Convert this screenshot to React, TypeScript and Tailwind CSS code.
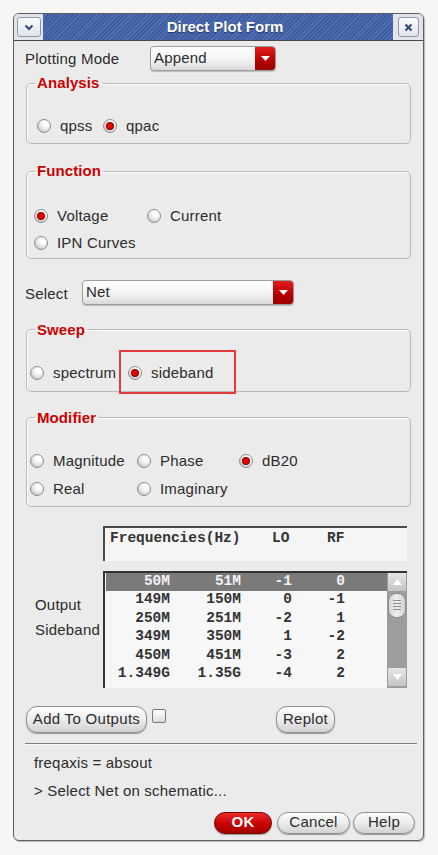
import type { ReactNode } from 'react';

const rows = [
    ['50M', '51M', '-1', '0'],
    ['149M', '150M', '0', '-1'],
    ['250M', '251M', '-2', '1'],
    ['349M', '350M', '1', '-2'],
    ['450M', '451M', '-3', '2'],
    ['1.349G', '1.35G', '-4', '2'],
];

function Radio({ checked = false, label, className = '' }: { checked?: boolean; label: string; className?: string }) {
    return (
        <div className={`flex h-[18px] shrink-0 items-center ${className}`}>
            <span className="flex h-[14px] w-[14px] shrink-0 items-center justify-center rounded-full border border-[#8e8e8e] bg-[radial-gradient(circle_at_65%_30%,#ffffff_20%,#e4e4e4_55%,#a8a8a8_100%)]">
                {checked && <span className="h-[6px] w-[6px] rounded-full bg-[#e40000] shadow-[0_0_0_1px_#8a0000]" />}
            </span>
            <span className="ml-[9px] leading-[18px]">{label}</span>
        </div>
    );
}

function Group({ title, children, className = '' }: { title: string; children: ReactNode; className?: string }) {
    return (
        <fieldset className={`rounded-[5px] border border-[#b9b9b9] shadow-[inset_1px_1px_0_#ffffff] ${className}`}>
            <legend className="ml-[8px] px-[2px] text-[15px] font-bold leading-4 tracking-[0.1px] text-[#cc0000]">{title}</legend>
            {children}
        </fieldset>
    );
}

function Dropdown({ value, className = '' }: { value: string; className?: string }) {
    return (
        <div className={`flex h-[25px] overflow-hidden rounded-[4px] border border-[#9c9c9c] bg-[linear-gradient(#ffffff,#f2f2f2_60%,#d9d9d9)] shadow-[0_1px_1px_rgba(0,0,0,0.2)] ${className}`}>
            <span className="flex-1 pl-[3px] text-[15px] leading-[21px]">{value}</span>
            <span className="flex w-[20px] items-center justify-center bg-[linear-gradient(#e41c1c,#b40000_60%,#9c0000)]">
                <svg width="9" height="5" viewBox="0 0 9 5">
                    <path d="M0 0H9L4.5 5Z" fill="#ffffff" />
                </svg>
            </span>
        </div>
    );
}

function Button({ children, red = false, className = '' }: { children: ReactNode; red?: boolean; className?: string }) {
    const look = red
        ? 'border-[#7a0000] bg-[linear-gradient(#ec2a2a,#c80000_55%,#a00000)] font-bold text-white'
        : 'border-[#8f8f8f] bg-[linear-gradient(#fdfdfd,#ececec_50%,#d2d2d2)]';
    return (
        <button className={`flex items-center justify-center rounded-[11px] border text-[15px] tracking-[0.3px] shadow-[0_1px_1px_rgba(0,0,0,0.35)] ${look} ${className}`}>
            {children}
        </button>
    );
}

export default function App() {
    return (
        <div className="min-h-[855px] bg-[#f6f6f6] pl-[13px] pt-[13px] font-[family-name:'Liberation_Sans',Arial,sans-serif] text-[#2c2c2c]">
            <div className="w-[411px] overflow-hidden rounded-[6px] border border-[#5e5e5e] bg-[#ebebeb] shadow-[1px_1px_1px_rgba(0,0,0,0.25)]">
                {/* title bar */}
                <div className="flex h-[27px] border-b border-[#4a4a4a]">
                    <div className="flex w-[29px] items-center justify-center bg-[#e2e5ea]">
                        <div className="flex h-[20px] w-[24px] items-center justify-center rounded-[3px] border border-[#8d97a8] bg-[linear-gradient(#fbfcfd,#dfe4ec)]">
                            <svg width="10" height="7" viewBox="0 0 10 7">
                                <path d="M1.5 1.5L5 5L8.5 1.5" fill="none" stroke="#34476e" strokeWidth="2" />
                            </svg>
                        </div>
                    </div>
                    <div className="flex flex-1 items-center justify-center bg-[repeating-linear-gradient(135deg,#3f5da3_0px,#3f5da3_2px,#5572b6_2px,#5572b6_3px)] pl-[14px] text-[15px] font-bold text-white [text-shadow:0_1px_1px_#23365f]">
                        Direct Plot Form
                    </div>
                    <div className="flex w-[30px] items-center justify-center bg-[#e2e5ea]">
                        <div className="flex h-[20px] w-[21px] items-center justify-center rounded-[3px] border border-[#8d97a8] bg-[linear-gradient(#fbfcfd,#dfe4ec)]">
                            <svg width="9" height="9" viewBox="0 0 9 9">
                                <path d="M1.5 1.5L7.5 7.5M7.5 1.5L1.5 7.5" fill="none" stroke="#34476e" strokeWidth="2" />
                            </svg>
                        </div>
                    </div>
                </div>

                <div className="pb-[6px] pl-[11px] pr-[12px] text-[15px] tracking-[0.2px]">
                    <div className="mt-[5px] flex items-center">
                        <span className="w-[125px] pt-[2px]">Plotting Mode</span>
                        <Dropdown value="Append" className="w-[126px]" />
                    </div>

                    <Group title="Analysis" className="ml-[1px] mt-[4px]">
                        <div className="flex pb-[8px] pl-[10px] pt-[26px]">
                            <Radio label="qpss" className="w-[66px]" />
                            <Radio label="qpac" checked />
                        </div>
                    </Group>

                    <Group title="Function" className="ml-[1px] mt-[19px]">
                        <div className="pb-[6px] pl-[7px] pt-[28px]">
                            <div className="flex">
                                <Radio label="Voltage" checked className="w-[113px]" />
                                <Radio label="Current" />
                            </div>
                            <Radio label="IPN Curves" className="mt-[9px]" />
                        </div>
                    </Group>

                    <div className="mt-[21px] flex items-center">
                        <span className="w-[57px] pt-[3px]">Select</span>
                        <Dropdown value="Net" className="w-[212px]" />
                    </div>

                    <Group title="Sweep" className="ml-[1px] mt-[16px]">
                        <div className="relative flex pb-[9px] pl-[3px] pt-[26px]">
                            <Radio label="spectrum" className="w-[98px]" />
                            <Radio label="sideband" checked />
                            <div className="absolute left-[92px] top-[12px] h-[44px] w-[117px] border-2 border-[#e23a3a]" />
                        </div>
                    </Group>

                    <Group title="Modifier" className="ml-[1px] mt-[18px]">
                        <div className="pb-[8px] pl-[3px] pt-[26px]">
                            <div className="flex">
                                <Radio label="Magnitude" className="w-[107px]" />
                                <Radio label="Phase" className="w-[102px]" />
                                <Radio label="dB20" checked />
                            </div>
                            <div className="mt-[10px] flex">
                                <Radio label="Real" className="w-[107px]" />
                                <Radio label="Imaginary" />
                            </div>
                        </div>
                    </Group>

                    {/* sideband table */}
                    <div className="ml-[78px] mr-[4px] mt-[19px] h-[35px] border-l-2 border-t-2 border-[#4a4a4a] bg-[#f5f5f5] pl-[5px] pt-[1px] font-[family-name:'Liberation_Mono',monospace] text-[14.5px] font-bold leading-[18px] tracking-normal text-[#333333]">
                        <span className="inline-block w-[162px]">Frequencies(Hz)</span>
                        <span className="inline-block w-[55px]">LO</span>
                        <span className="inline-block">RF</span>
                    </div>

                    <div className="mt-[10px] flex">
                        <div className="w-[78px] pl-[10px] pt-[21px] leading-[25px]">
                            <div>Output</div>
                            <div>Sideband</div>
                        </div>
                        <div className="mr-[4px] flex h-[117px] flex-1 border-l-2 border-t-2 border-[#333333] bg-[#f7f7f7]">
                            <div className="flex-1 pl-[1px] font-[family-name:'Liberation_Mono',monospace] text-[14.5px] font-bold tracking-normal text-[#333333]">
                                {rows.map((r, i) => (
                                    <div
                                        key={r[0]}
                                        className={`flex h-[18.5px] items-center whitespace-pre ${i === 0 ? 'bg-[#7a7a7a] text-[#f2f2f2]' : ''}`}
                                    >
                                        <span className="w-[64px] text-right">{r[0]}</span>
                                        <span className="w-[71px] text-right">{r[1]}</span>
                                        <span className="w-[51px] text-right">{r[2]}</span>
                                        <span className="w-[53px] text-right">{r[3]}</span>
                                    </div>
                                ))}
                            </div>
                            <div className="flex w-[20px] flex-col bg-[#9d9d9d] px-[1px]">
                                <div className="flex h-[18px] items-center justify-center bg-[linear-gradient(#e6e6e6,#c4c4c4)]">
                                    <svg width="9" height="6" viewBox="0 0 9 6">
                                        <path d="M0 6L4.5 0L9 6Z" fill="#ffffff" />
                                    </svg>
                                </div>
                                <div className="mt-[2px] flex h-[25px] flex-col items-center justify-center gap-[2px] rounded-[8px] border border-[#8a8a8a] bg-[linear-gradient(90deg,#d6d6d6,#f0f0f0,#cfcfcf)]">
                                    <span className="h-px w-[8px] bg-[#8a8a8a]" />
                                    <span className="h-px w-[8px] bg-[#8a8a8a]" />
                                    <span className="h-px w-[8px] bg-[#8a8a8a]" />
                                    <span className="h-px w-[8px] bg-[#8a8a8a]" />
                                </div>
                                <div className="flex-1" />
                                <div className="mb-[2px] flex h-[18px] items-center justify-center bg-[linear-gradient(#e6e6e6,#c4c4c4)]">
                                    <svg width="9" height="6" viewBox="0 0 9 6">
                                        <path d="M0 0L4.5 6L9 0Z" fill="#ffffff" />
                                    </svg>
                                </div>
                            </div>
                        </div>
                    </div>

                    <div className="mt-[18px] flex items-start">
                        <Button className="ml-[1px] h-[27px] w-[121px]">Add To Outputs</Button>
                        <span className="ml-[5px] mt-[3px] h-[14px] w-[14px] rounded-[2px] border border-[#7a7a7a] bg-[linear-gradient(#ffffff,#dcdcdc)]" />
                        <Button className="ml-[110px] h-[27px] w-[59px]">Replot</Button>
                    </div>

                    <div className="-mr-[6px] mt-[10px] h-[2px] border-t border-[#7c7c7c] bg-[#fafafa]" />

                    <div className="ml-[9px] mt-[9px] leading-[18px]">freqaxis = absout</div>
                    <div className="ml-[9px] mt-[10px] leading-[18px]">&gt; Select Net on schematic...</div>

                    <div className="-mr-[4px] mt-[12px] flex justify-end">
                        <Button red className="h-[22px] w-[58px]">
                            OK
                        </Button>
                        <Button className="ml-[5px] h-[22px] w-[73px]">Cancel</Button>
                        <Button className="ml-[3px] h-[22px] w-[62px]">Help</Button>
                    </div>
                </div>
            </div>
        </div>
    );
}
